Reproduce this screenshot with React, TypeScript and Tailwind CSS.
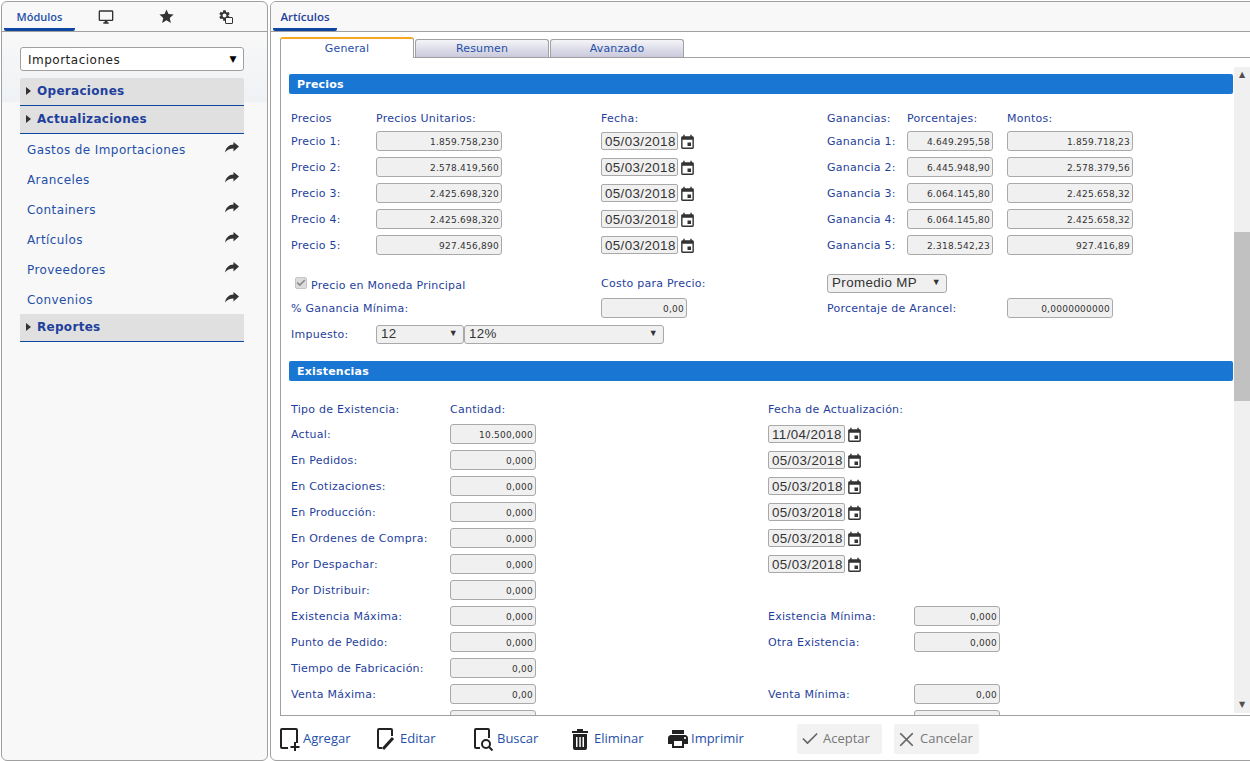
import React from "react";
import { Check, X } from "lucide-react";
import { MdEvent, MdOutlineDesktopWindows, MdStar, MdPrint, MdSettings } from "react-icons/md";

const font = "font-['DejaVu_Sans',Verdana,sans-serif]";

const Input = ({ value, w = "w-[126px]" }: { value: string; w?: string }) => (
  <div className={`${w} h-[20px] bg-[#f0f0f0] border border-[#a9a9a9] rounded-[3px] text-right pr-[2px] text-[9px] leading-[20px] text-[#333] tracking-[0.25px]`}>
    {value}
  </div>
);

const DateField = ({ value }: { value: string }) => (
  <div className="flex items-center">
    <div className="w-[77px] h-[18px] bg-[#f0f0f0] border border-[#a9a9a9] rounded-[2px] pl-[3px] text-[13.33px] leading-[17px] text-[#333] whitespace-nowrap font-['Liberation_Sans',sans-serif] tracking-[0.4px]">
      {value}
    </div>
    <MdEvent className="text-[#333] w-[17px] h-[17px] ml-[1px] mt-[2px] shrink-0" />
  </div>
);

const Select = ({ value, w }: { value: string; w: string }) => (
  <div className={`${w} h-[19px] bg-[#f0f0f0] border border-[#a9a9a9] rounded-[3px] flex items-center justify-between pl-[4px] pr-[5px] text-[13.33px] text-[#333] font-['Liberation_Sans',sans-serif] tracking-[0.4px]`}>
    <span>{value}</span>
    <span className="text-[9px] text-[#333]">▼</span>
  </div>
);

const Label = ({ children, className = "" }: { children?: React.ReactNode; className?: string }) => (
  <span className={`pt-[2px] text-[11px] text-[#1f3f9c] whitespace-nowrap tracking-[0.25px] ${className}`}>{children}</span>
);

const SectionBar = ({ title }: { title: string }) => (
  <div className="h-[20px] ml-[8px] w-[944px] bg-[#1976d2] rounded-[2px] pl-[8px] text-[11px] leading-[21px] font-bold text-white tracking-[0.2px]">
    {title}
  </div>
);

const precios = [
  ["Precio 1:", "1.859.758,230", "Ganancia 1:", "4.649.295,58", "1.859.718,23"],
  ["Precio 2:", "2.578.419,560", "Ganancia 2:", "6.445.948,90", "2.578.379,56"],
  ["Precio 3:", "2.425.698,320", "Ganancia 3:", "6.064.145,80", "2.425.658,32"],
  ["Precio 4:", "2.425.698,320", "Ganancia 4:", "6.064.145,80", "2.425.658,32"],
  ["Precio 5:", "927.456,890", "Ganancia 5:", "2.318.542,23", "927.416,89"],
];

const preciosCols = "grid grid-cols-[85px_225px_226px_80px_100px_1fr] items-center pl-[10px]";
const existCols = "grid grid-cols-[159px_318px_146px_1fr] items-center pl-[10px]";

const existencias: [string, string, string?, string?, string?][] = [
  ["Actual:", "10.500,000", "11/04/2018"],
  ["En Pedidos:", "0,000", "05/03/2018"],
  ["En Cotizaciones:", "0,000", "05/03/2018"],
  ["En Producción:", "0,000", "05/03/2018"],
  ["En Ordenes de Compra:", "0,000", "05/03/2018"],
  ["Por Despachar:", "0,000", "05/03/2018"],
  ["Por Distribuir:", "0,000"],
  ["Existencia Máxima:", "0,000", undefined, "Existencia Mínima:", "0,000"],
  ["Punto de Pedido:", "0,000", undefined, "Otra Existencia:", "0,000"],
  ["Tiempo de Fabricación:", "0,00"],
  ["Venta Máxima:", "0,00", undefined, "Venta Mínima:", "0,00"],
  ["", "", undefined, "", " "],
];

const menuItems = ["Gastos de Importaciones", "Aranceles", "Containers", "Artículos", "Proveedores", "Convenios"];

const MenuHeader = ({ title }: { title: string }) => (
  <div className="h-[28px] bg-[#e0e0e0] border-b border-[#0d47a1] flex items-center pl-[6px] pb-[1px] gap-[6px]">
    <span className="w-0 h-0 border-y-[4px] border-y-transparent border-l-[5px] border-l-[#333]" />
    <span className="text-[12px] font-bold text-[#1f3f9c] tracking-[0.3px]">{title}</span>
  </div>
);

const ShareIcon = () => (
  <svg width="14" height="11" viewBox="0 0 14 11" fill="#333" className="mb-[5px] shrink-0">
    <path d="M14 4.500 8.500 0v2.600C4 2.800 1 5.500 0 10.500 2 7.800 4.800 6.500 8.500 6.500V9.500z" />
  </svg>
);

const ToolButton = ({ icon, label, w, gap = "gap-[2px]" }: { icon: React.ReactNode; label: string; w: string; gap?: string }) => (
  <div className={`${w} flex items-center ${gap} font-['Open_Sans',sans-serif] text-[13px] text-[#1f4fa8]`}>
    {icon}
    <span>{label}</span>
  </div>
);

const ToolSvg = ({ children }: { children: React.ReactNode }) => (
  <svg width="22" height="24" viewBox="0 0 22 24" fill="none" stroke="#222" strokeWidth="2">
    {children}
  </svg>
);

export default function App() {
  return (
    <div className={`${font} w-[1250px] h-[761px] overflow-hidden bg-white flex gap-[2px] pl-[1px] pt-[1px]`}>
      {/* modulos */}
      <div className="w-[267px] h-[760px] shrink-0 border border-[#a0a0a0] rounded-[6px] bg-[#f8f8f8] overflow-hidden">
        <div className="h-[30px] flex items-end border-b border-[#a0a0a0] pl-[2px]">
          <div className="w-[71px] h-[28px] border-b-[3px] border-[#0d47a1] rounded-b-[2px] font-['Open_Sans',sans-serif] text-[11px] font-semibold text-[#1f4fa8] text-center leading-[27px]">
            Módulos
          </div>
          <div className="ml-[1px] w-[60px] h-[29px] flex items-center justify-center"><MdOutlineDesktopWindows className="w-[16px] h-[16px] text-[#333]" /></div>
          <div className="w-[60px] h-[29px] flex items-center justify-center"><MdStar className="w-[17px] h-[17px] text-[#333]" /></div>
          <div className="w-[60px] h-[29px] flex items-center justify-center">
            <div className="relative w-[15px] h-[15px] -ml-[1px]">
              <MdSettings className="w-[13px] h-[13px] text-[#333]" />
              <span className="absolute right-0 bottom-0 w-[8px] h-[7px] bg-[#f8f8f8] border-[1.500px] border-[#333] rounded-[1px]" />
            </div>
          </div>
        </div>
        <div className="pl-[18px] pr-[23px] pt-[15px] bg-[linear-gradient(#f8f8f8,#eff2f5)] bg-no-repeat bg-[length:100%_70px]">
          <div className="h-[24px] pt-[1px] bg-white border border-[#a0a0a0] rounded-[3px] flex items-center justify-between pl-[7px] pr-[6px] text-[12px] text-[#222] tracking-[0.5px]">
            <span>Importaciones</span>
            <span className="text-[9px] text-black">▼</span>
          </div>
          <div className="mt-[7px] rounded-t-[2px] overflow-hidden">
            <MenuHeader title="Operaciones" />
            <MenuHeader title="Actualizaciones" />
          </div>
          <div>
            {menuItems.map((m) => (
              <div key={m} className="h-[30px] flex items-center justify-between pl-[7px] pr-[5px] pt-[2px] text-[12px] text-[#1f4fa8] tracking-[0.4px]">
                <span>{m}</span>
                <ShareIcon />
              </div>
            ))}
          </div>
          <MenuHeader title="Reportes" />
        </div>
      </div>

      {/* articulos */}
      <div className="w-[990px] shrink-0 h-[760px] border border-[#a0a0a0] rounded-[6px] flex flex-col overflow-hidden">
        <div className="h-[30px] shrink-0 bg-[#f8f8f8] border-b border-[#a0a0a0] flex items-end pl-[2px]">
          <div className="w-[64px] h-[28px] border-b-[3px] border-[#0d47a1] rounded-b-[2px] font-['Open_Sans',sans-serif] text-[11.500px] font-semibold text-[#1f3f9c] text-center leading-[27px]">
            Artículos
          </div>
        </div>

        <div className="h-[684px] shrink-0 pl-[9px] pt-[5px] flex flex-col">
          {/* tabs */}
          <div className="h-[21px] shrink-0 flex items-end gap-[1px] text-[11px] text-[#1f4fa8] tracking-[0.15px] border-b border-[#a0a0a0]">
            <div className="w-[134px] h-[21px] -mb-[1px] bg-white border border-[#a0a0a0] border-b-0 border-t-[2px] border-t-[#f9a825] rounded-t-[3px] text-center leading-[20px]">General</div>
            <div className="w-[134px] h-[18px] bg-gradient-to-b from-[#f4f4f8] to-[#c9c9dc] border border-[#a0a0a0] border-b-0 rounded-t-[3px] text-center leading-[17px]">Resumen</div>
            <div className="w-[134px] h-[18px] bg-gradient-to-b from-[#f4f4f8] to-[#c9c9dc] border border-[#a0a0a0] border-b-0 rounded-t-[3px] text-center leading-[17px]">Avanzado</div>
          </div>

          <div className="flex-1 min-h-0 border-l border-b border-[#a0a0a0] flex overflow-hidden">
            <div className="w-[953px] shrink-0 overflow-hidden">
              <div className="h-[16px]" />
              <SectionBar title="Precios" />
              <div className="h-[14px]" />
              <div className={`${preciosCols} h-[20px]`}>
                <Label>Precios</Label><Label>Precios Unitarios:</Label><Label>Fecha:</Label><Label>Ganancias:</Label><Label>Porcentajes:</Label><Label>Montos:</Label>
              </div>
              {precios.map((p) => (
                <div key={p[0]} className={`${preciosCols} h-[26px]`}>
                  <Label>{p[0]}</Label>
                  <Input value={p[1]} />
                  <DateField value="05/03/2018" />
                  <Label>{p[2]}</Label>
                  <Input value={p[3]} w="w-[86px]" />
                  <Input value={p[4]} />
                </div>
              ))}
              <div className="h-[12px]" />
              <div className={`${preciosCols} h-[26px]`}>
                <div className="flex items-center whitespace-nowrap pl-[4px] gap-[4px]">
                  <span className="w-[12px] h-[12px] bg-[#dcdcdc] rounded-[2px] border border-[#c4c4c4] flex items-center justify-center shrink-0">
                    <Check className="w-[10px] h-[10px] text-[#8a8a8a]" strokeWidth={4} />
                  </span>
                  <div className="pt-[1px]"><Label>Precio en Moneda Principal</Label></div>
                </div>
                <div />
                <Label>Costo para Precio:</Label>
                <div className="col-span-3"><Select value="Promedio MP" w="w-[120px]" /></div>
              </div>
              <div className={`${preciosCols} h-[26px] -mt-[1px]`}>
                <Label className="col-span-2">% Ganancia Mínima:</Label>
                <Input value="0,00" w="w-[86px]" />
                <Label className="col-span-2">Porcentaje de Arancel:</Label>
                <Input value="0,0000000000" w="w-[106px]" />
              </div>
              <div className={`${preciosCols} h-[26px]`}>
                <Label>Impuesto:</Label>
                <div className="flex col-span-2">
                  <Select value="12" w="w-[88px]" />
                  <Select value="12%" w="w-[200px]" />
                </div>
              </div>

              <div className="h-[14px]" />
              <SectionBar title="Existencias" />
              <div className="h-[16px]" />
              <div className={`${existCols} h-[24px]`}>
                <Label>Tipo de Existencia:</Label><Label>Cantidad:</Label><Label>Fecha de Actualización:</Label>
              </div>
              {existencias.map((e, i) => (
                <div key={i} className={`${existCols} h-[26px]`}>
                  <Label>{e[0]}</Label>
                  <Input value={e[1]} w="w-[86px]" />
                  {e[2] ? <DateField value={e[2]} /> : <Label>{e[3]}</Label>}
                  {e[4] ? <Input value={e[4]} w="w-[86px]" /> : <div />}
                </div>
              ))}
            </div>

            {/* scrollbar */}
            <div className="w-[16px] shrink-0 mt-[9px] mb-[2px] bg-[#f0f0f0] flex flex-col items-center text-[#505050]">
              <div className="h-[16px] shrink-0 flex items-center justify-center text-[8px]">▲</div>
              <div className="h-[149px] shrink-0" />
              <div className="h-[169px] w-full shrink-0 bg-[#c1c1c1]" />
              <div className="flex-1" />
              <div className="h-[16px] shrink-0 flex items-center justify-center text-[8px]">▼</div>
            </div>
          </div>
        </div>

        {/* toolbar */}
        <div className="flex-1 flex items-center pl-[7px] pt-[2px]">
          <ToolButton w="w-[98px]" gap="gap-[3px]" label="Agregar" icon={
            <ToolSvg><path d="M10 21H4a1 1 0 0 1-1-1V3a1 1 0 0 1 1-1h14a1 1 0 0 1 1 1v13" /><path d="M17 15v9M12.500 20h9" /></ToolSvg>
          } />
          <ToolButton w="w-[97px]" label="Editar" icon={
            <ToolSvg><path d="M6 21H3a1 1 0 0 1-1-1V3a1 1 0 0 1 1-1h12a1 1 0 0 1 1 1v6" /><path d="M7 22l10-11" strokeWidth="3" /></ToolSvg>
          } />
          <ToolButton w="w-[97px]" label="Buscar" icon={
            <ToolSvg><path d="M7 21H3a1 1 0 0 1-1-1V3a1 1 0 0 1 1-1h12a1 1 0 0 1 1 1v8" /><circle cx="13" cy="17" r="4" /><path d="M16 20l3.500 3.500" /></ToolSvg>
          } />
          <ToolButton w="w-[96px]" gap="gap-[4px]" label="Eliminar" icon={
            <svg width="20" height="22" viewBox="0 0 20 22" fill="#222"><path d="M7 1h6v2h5v2H2V3h5zM3 6h14v14a2 2 0 0 1-2 2H5a2 2 0 0 1-2-2zM6 9v10h1.500V9zM9.300 9v10h1.500V9zM12.500 9v10H14V9z" fillRule="evenodd" /></svg>
          } />
          <ToolButton w="w-[131px]" gap="gap-[1px]" label="Imprimir" icon={<MdPrint className="w-[24px] h-[24px] text-[#222]" />} />
          <div className="w-[85px] h-[30px] bg-[#f2f2f2] rounded-[2px] flex items-center pl-[3px] gap-[3px] font-['Open_Sans',sans-serif] text-[13px] text-[#777]">
            <Check className="w-[20px] h-[20px] text-[#666]" strokeWidth={2} /><span>Aceptar</span>
          </div>
          <div className="w-[85px] h-[30px] ml-[12px] bg-[#f2f2f2] rounded-[2px] flex items-center pl-[1px] gap-[2px] font-['Open_Sans',sans-serif] text-[13px] text-[#777]">
            <X className="w-[23px] h-[23px] text-[#666]" strokeWidth={1.8} /><span>Cancelar</span>
          </div>
        </div>
      </div>
    </div>
  );
}
